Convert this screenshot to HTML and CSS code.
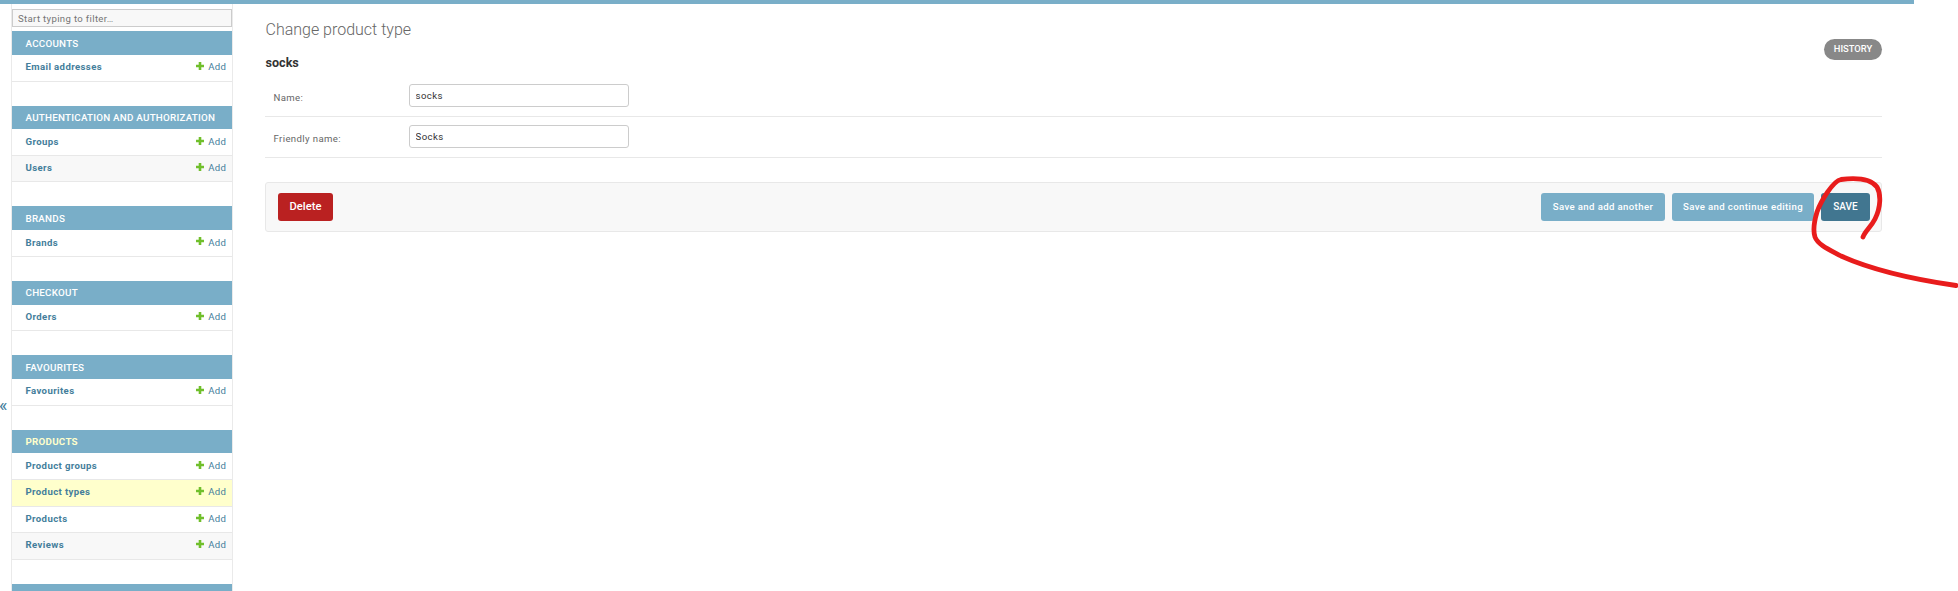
FILE: index.html
```html
<!DOCTYPE html>
<html lang="en">
<head>
<meta charset="utf-8">
<title>Change product type</title>
<link rel="stylesheet" href="styles.css">
</head>
<body>
<svg class="defs" width="0" height="0"><symbol id="plus" viewBox="0 0 8 8"><path d="M2.700 0h2.600v2.700H8v2.600H5.300V8H2.700V5.300H0V2.700h2.700z" fill="#70bf2b"/></symbol></svg>
<div class="topbar"></div>
<div class="main">
  <div class="toggle"><span>«</span></div>
  <nav class="sidebar">
    <input class="filter" type="text" placeholder="Start typing to filter…">
    <section class="module">
      <h2 class="low">Accounts</h2>
      <div class="row"><a class="model">Email addresses</a><a class="add"><svg><use href="#plus"/></svg>Add</a></div>
    </section>
    <section class="module">
      <h2 class="short">Authentication and Authorization</h2>
      <div class="row low"><a class="model">Groups</a><a class="add"><svg><use href="#plus"/></svg>Add</a></div>
      <div class="row short alt"><a class="model">Users</a><a class="add"><svg><use href="#plus"/></svg>Add</a></div>
    </section>
    <section class="module">
      <h2 class="low">Brands</h2>
      <div class="row low raised"><a class="model">Brands</a><a class="add"><svg><use href="#plus"/></svg>Add</a></div>
    </section>
    <section class="module">
      <h2>Checkout</h2>
      <div class="row short"><a class="model">Orders</a><a class="add"><svg><use href="#plus"/></svg>Add</a></div>
    </section>
    <section class="module">
      <h2 class="low">Favourites</h2>
      <div class="row"><a class="model">Favourites</a><a class="add"><svg><use href="#plus"/></svg>Add</a></div>
    </section>
    <section class="module">
      <h2 class="short current">Products</h2>
      <div class="row low"><a class="model">Product groups</a><a class="add"><svg><use href="#plus"/></svg>Add</a></div>
      <div class="row selected"><a class="model">Product types</a><a class="add"><svg><use href="#plus"/></svg>Add</a></div>
      <div class="row short"><a class="model">Products</a><a class="add"><svg><use href="#plus"/></svg>Add</a></div>
      <div class="row alt"><a class="model">Reviews</a><a class="add"><svg><use href="#plus"/></svg>Add</a></div>
    </section>
    <section class="module"><h2></h2></section>
  </nav>
  <main class="content">
    <h1>Change product type</h1>
    <div class="heading"><h3>socks</h3><a class="history">HISTORY</a></div>
    <div class="field"><label for="name">Name:</label><input id="name" type="text" value="socks"></div>
    <div class="field"><label for="friendly">Friendly name:</label><input id="friendly" type="text" value="Socks"></div>
    <div class="submit">
      <a class="button delete">Delete</a>
      <a class="button another">Save and add another</a>
      <a class="button continue">Save and continue editing</a>
      <a class="button save">SAVE</a>
    </div>
  </main>
</div>
<svg class="scribble" viewBox="0 0 168 140"><path d="M73 77 C75 71 81 67 85 59 C91 47 91 34 87 27 C80 18 63 18 51 19.500 C43 21 31 41 27 52 C24 62 23 71 25 77 C28 85 40 90 51 96 C80 109 121 119 166 125.500" fill="none" stroke="#e81c1c" stroke-width="4.800" stroke-linecap="round" stroke-linejoin="round"/></svg>
</body>
</html>
```
FILE: styles.css
```css
* { box-sizing: border-box; }
body { margin: 0; height: 591px; overflow: hidden; position: relative; background: #fff; color: #333; font-family: Roboto, "Liberation Sans", sans-serif; font-size: 9.6px; letter-spacing: .38px; }
h1, h2, h3 { margin: 0; }
.defs { position: absolute; }
.topbar { width: 1914px; height: 4px; background: #79aec8; }
.main { display: flex; height: 587px; overflow: hidden; }
.toggle { width: 11px; flex: none; padding-top: 391px; color: #447e9b; }
.toggle span { display: block; font-size: 18px; line-height: 20px; letter-spacing: 0; margin-left: -1px; }
.sidebar { width: 222px; height: 640px; flex: none; border: solid #eaeaea; border-width: 0 1px; padding-top: 5px; }
.filter { display: block; width: 220px; height: 18px; margin: 0 0 4px; padding: 1px 5px 0; border: 1px solid #ccc; border-radius: 0; background: #f8f8f8; font: 9.6px Roboto, sans-serif; letter-spacing: .34px; }
.filter::placeholder { color: #757575; opacity: 1; }
.module { margin-bottom: 24px; }
.module h2 { height: 24px; padding: 5px 0 0 13.500px; background: #79aec8; color: #fff; font-size: 9.8px; line-height: 13px; letter-spacing: .24px; font-weight: 500; text-transform: uppercase; white-space: nowrap; }
.module h2.low, .row.low { padding-top: 6px; }
.module h2.short { height: 23px; }
.module h2.current { color: #ffc; font-weight: 700; }
.row { display: flex; justify-content: space-between; height: 27px; padding: 5px 5.600px 0 13.500px; border-bottom: 1px solid #e8e8e8; line-height: 13px; color: #447e9b; }
.row.short { height: 26px; }
.alt { background: #f8f8f8; }
.selected { background: #ffc; }
.model { font-weight: 700; }
.add { display: flex; }
.add svg { width: 8px; height: 8px; margin: 2px 4px 0 0; }
.raised svg { margin-top: 1px; }
.content { width: 1617px; margin-left: 32px; }
h1 { height: 47px; padding: 15px 0 0 .5px; font-size: 16px; line-height: 22px; letter-spacing: 0; font-weight: 300; color: #666; }
.heading { display: flex; justify-content: space-between; height: 22px; }
h3 { padding: 3px 0 0 .5px; font-size: 12.600px; line-height: 18px; letter-spacing: 0; font-weight: 700; color: #333; }
.history { width: 58px; height: 21px; margin-top: -12px; border-radius: 11px; background: #888; color: #fff; font-size: 9.400px; line-height: 19px; letter-spacing: 0; font-weight: 500; text-align: center; }
.field { display: flex; height: 41px; padding: 8px 0 0 8px; border-bottom: 1px solid #e8e8e8; }
.heading + .field { height: 44px; padding-top: 11px; }
.field label { width: 136px; padding: 7px 0 0 .5px; line-height: 13px; color: #666; }
.field input { width: 220px; height: 23px; margin: 0; padding: 0 5.500px; border: 1px solid #ccc; border-radius: 3px; background: #fff; color: #333; font: 9.6px Roboto, sans-serif; letter-spacing: .45px; }
.submit { display: flex; height: 50px; margin-top: 24px; padding: 10px 11px 0 12px; border: 1px solid #e8e8e8; border-radius: 3px; background: #f8f8f8; }
.button { height: 28px; border-radius: 3px; background: #79aec8; color: #fff; line-height: 27px; font-weight: 500; text-align: center; white-space: nowrap; }
.delete { width: 55px; margin-right: auto; background: #ba2121; font-size: 11.200px; line-height: 28px; letter-spacing: 0; }
.another { width: 124px; }
.continue { width: 142px; margin: 0 7px; }
.save { width: 49px; background: #417690; font-size: 10px; letter-spacing: 0; }
.scribble { position: absolute; left: 1790px; top: 160px; width: 168px; height: 140px; }
```
